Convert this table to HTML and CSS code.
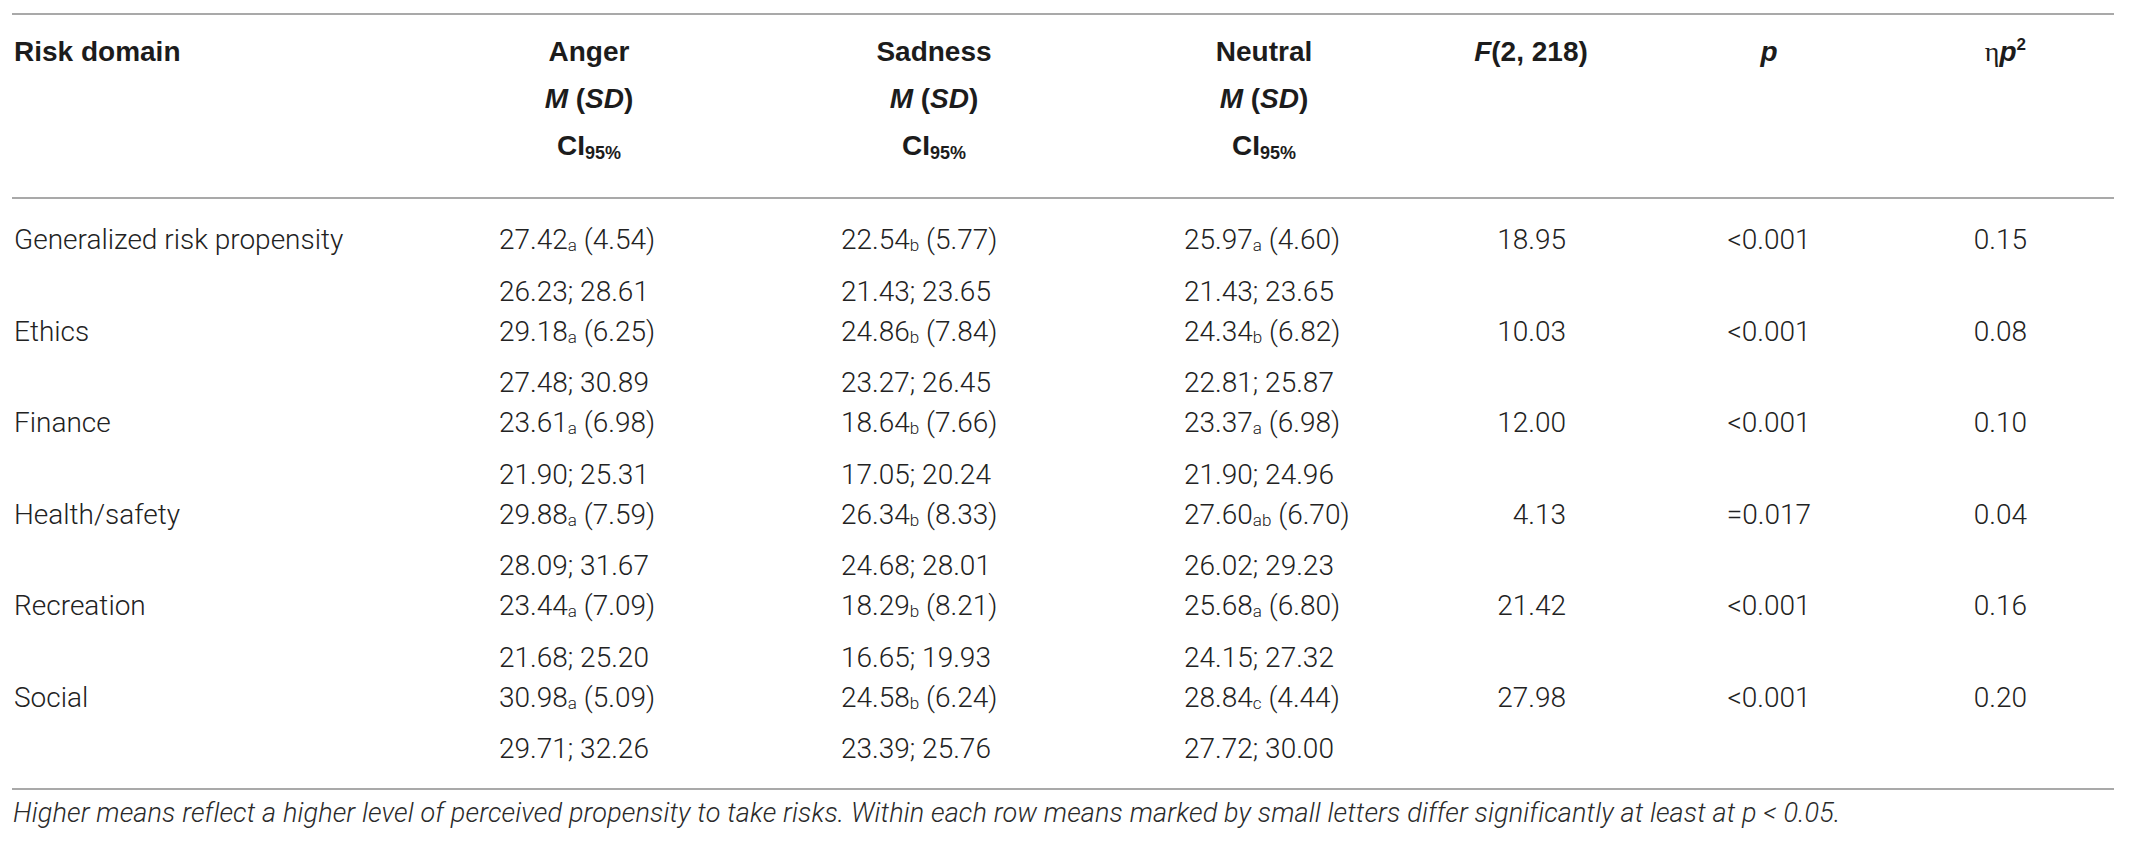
FILE: index.html
```html
<!DOCTYPE html>
<html lang="en">
<head>
<meta charset="utf-8">
<title>Risk domain table</title>
<link rel="stylesheet" href="styles.css">
</head>
<body>
<div class="tbl">
  <div class="head grid">
    <div class="c-name">Risk domain</div>
    <div class="c-emo"><div class="hb hb-anger">Anger<br><i>M</i> (<i>SD</i>)<br>CI<span class="hsub">95%</span></div></div>
    <div class="c-emo"><div class="hb hb-sad">Sadness<br><i>M</i> (<i>SD</i>)<br>CI<span class="hsub">95%</span></div></div>
    <div class="c-emo"><div class="hb hb-neu">Neutral<br><i>M</i> (<i>SD</i>)<br>CI<span class="hsub">95%</span></div></div>
    <div class="c-f"><i>F</i>(2, 218)</div>
    <div class="c-p"><i>p</i></div>
    <div class="c-eta"><span class="eta">η</span><i>p</i><span class="hsup">2</span></div>
  </div>
  <div class="body">
    <div class="row grid">
      <div class="c-name">Generalized risk propensity</div>
      <div class="v">27.42<span class="sub">a</span> (4.54)</div>
      <div class="v">22.54<span class="sub">b</span> (5.77)</div>
      <div class="v">25.97<span class="sub">a</span> (4.60)</div>
      <div class="vf">18.95</div>
      <div class="vp">&lt;0.001</div>
      <div class="ve">0.15</div>
      <div class="ci c2">26.23; 28.61</div>
      <div class="ci c3">21.43; 23.65</div>
      <div class="ci c4">21.43; 23.65</div>
    </div>
    <div class="row grid">
      <div class="c-name">Ethics</div>
      <div class="v">29.18<span class="sub">a</span> (6.25)</div>
      <div class="v">24.86<span class="sub">b</span> (7.84)</div>
      <div class="v">24.34<span class="sub">b</span> (6.82)</div>
      <div class="vf">10.03</div>
      <div class="vp">&lt;0.001</div>
      <div class="ve">0.08</div>
      <div class="ci c2">27.48; 30.89</div>
      <div class="ci c3">23.27; 26.45</div>
      <div class="ci c4">22.81; 25.87</div>
    </div>
    <div class="row grid">
      <div class="c-name">Finance</div>
      <div class="v">23.61<span class="sub">a</span> (6.98)</div>
      <div class="v">18.64<span class="sub">b</span> (7.66)</div>
      <div class="v">23.37<span class="sub">a</span> (6.98)</div>
      <div class="vf">12.00</div>
      <div class="vp">&lt;0.001</div>
      <div class="ve">0.10</div>
      <div class="ci c2">21.90; 25.31</div>
      <div class="ci c3">17.05; 20.24</div>
      <div class="ci c4">21.90; 24.96</div>
    </div>
    <div class="row grid">
      <div class="c-name">Health/safety</div>
      <div class="v">29.88<span class="sub">a</span> (7.59)</div>
      <div class="v">26.34<span class="sub">b</span> (8.33)</div>
      <div class="v">27.60<span class="sub">ab</span> (6.70)</div>
      <div class="vf">4.13</div>
      <div class="vp">=0.017</div>
      <div class="ve">0.04</div>
      <div class="ci c2">28.09; 31.67</div>
      <div class="ci c3">24.68; 28.01</div>
      <div class="ci c4">26.02; 29.23</div>
    </div>
    <div class="row grid">
      <div class="c-name">Recreation</div>
      <div class="v">23.44<span class="sub">a</span> (7.09)</div>
      <div class="v">18.29<span class="sub">b</span> (8.21)</div>
      <div class="v">25.68<span class="sub">a</span> (6.80)</div>
      <div class="vf">21.42</div>
      <div class="vp">&lt;0.001</div>
      <div class="ve">0.16</div>
      <div class="ci c2">21.68; 25.20</div>
      <div class="ci c3">16.65; 19.93</div>
      <div class="ci c4">24.15; 27.32</div>
    </div>
    <div class="row grid">
      <div class="c-name">Social</div>
      <div class="v">30.98<span class="sub">a</span> (5.09)</div>
      <div class="v">24.58<span class="sub">b</span> (6.24)</div>
      <div class="v">28.84<span class="sub">c</span> (4.44)</div>
      <div class="vf">27.98</div>
      <div class="vp">&lt;0.001</div>
      <div class="ve">0.20</div>
      <div class="ci c2">29.71; 32.26</div>
      <div class="ci c3">23.39; 25.76</div>
      <div class="ci c4">27.72; 30.00</div>
    </div>
  </div>
</div>
<p class="note">Higher means reflect a higher level of perceived propensity to take risks. Within each row means marked by small letters differ significantly at least at p &lt; 0.05.</p>
</body>
</html>
```

FILE: styles.css
```css
html, body {
  margin: 0;
  padding: 0;
  background: #ffffff;
}

body {
  font-family: Roboto, "Liberation Sans", Arial, sans-serif;
  font-weight: 300;
  font-size: 28px;
  color: #222222;
}

.tbl {
  margin: 13px 0 0 12px;
  width: 2102px;
  border-top: 2px solid #a9a9a9;
  border-bottom: 2px solid #a9a9a9;
}

.grid {
  display: grid;
  grid-template-columns: 487px 342px 343px 236px 232px 234px 1fr;
}

.head {
  font-family: "Liberation Sans", Arial, sans-serif;
  font-weight: 700;
  color: #1c1c1c;
  line-height: 47px;
  padding: 13px 0 28px;
  border-bottom: 2px solid #a9a9a9;
}

.head i {
  font-style: italic;
}

.c-name {
  padding-left: 2px;
}

.hb {
  text-align: center;
}

.hb-anger { width: 180px; }
.hb-sad { width: 186px; }
.hb-neu { width: 160px; }

.hsub {
  font-size: 18px;
  vertical-align: -4px;
  line-height: 0;
}

.c-f {
  text-align: center;
  padding-right: 10px;
}

.c-p {
  text-align: center;
}

.c-eta {
  text-align: right;
  padding-right: 88px;
}

.eta {
  font-family: "Liberation Serif", "Times New Roman", serif;
  font-weight: 400;
}

.hsup {
  font-size: 17px;
  vertical-align: 11px;
  line-height: 0;
}

.body {
  padding: 21px 0 19px;
}

.row {
  grid-template-rows: 40px 40px;
  row-gap: 11.5px;
  line-height: 40px;
}

.v {
  white-space: nowrap;
}

.sub {
  font-size: 17px;
  vertical-align: -2px;
  line-height: 0;
}

.vf {
  text-align: right;
  padding-right: 86px;
}

.vp {
  text-align: center;
}

.ve {
  text-align: right;
  padding-right: 87px;
}

.ci {
  grid-row: 2;
}

.c2 { grid-column: 2; }
.c3 { grid-column: 3; }
.c4 { grid-column: 4; }

.note {
  margin: 7px 0 0 13px;
  font-size: 27px;
  letter-spacing: 0.15px;
  line-height: 32px;
  font-style: italic;
  font-weight: 300;
  color: #2a2a2a;
  white-space: nowrap;
}
```
